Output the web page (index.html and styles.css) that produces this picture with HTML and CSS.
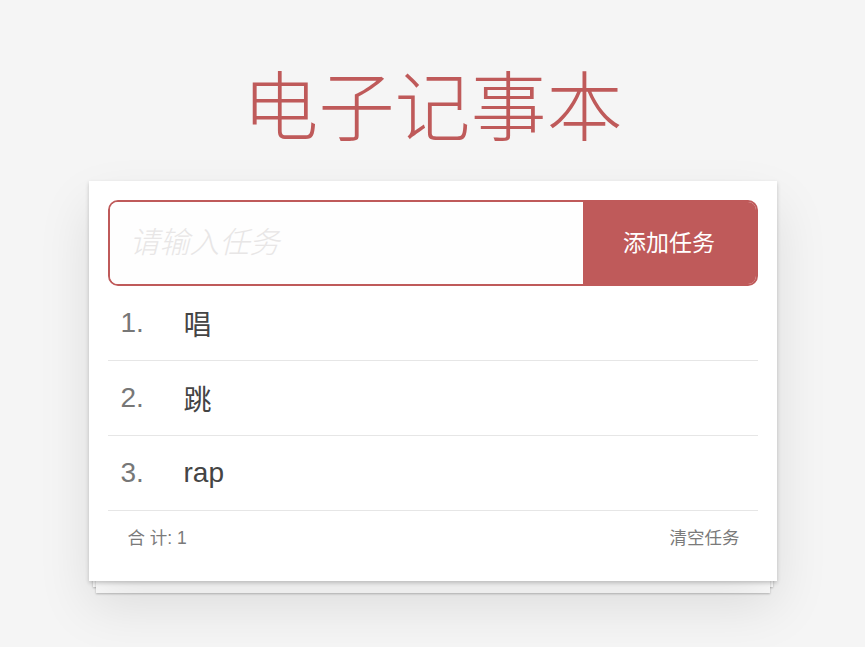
FILE: index.html
```html
<!DOCTYPE html>
<html lang="zh">
<head>
<meta charset="utf-8">
<title>电子记事本</title>
<link rel="stylesheet" href="styles.css">
</head>
<body>
<div class="app">
  <h1 class="title">电子记事本</h1>
  <section class="card">
    <div class="entry">
      <input class="entry-input" type="text" placeholder="请输入任务">
      <button class="entry-btn">添加任务</button>
    </div>
    <ul class="list">
      <li class="item"><span class="num">1.</span><span class="text">唱</span></li>
      <li class="item"><span class="num">2.</span><span class="text">跳</span></li>
      <li class="item"><span class="num">3.</span><span class="text">rap</span></li>
    </ul>
    <footer class="footer">
      <span class="count">合 计: 1</span>
      <span class="clear">清空任务</span>
    </footer>
  </section>
</div>
</body>
</html>
```
FILE: styles.css
```css
* { box-sizing: border-box; }
html, body { margin: 0; padding: 0; }
body {
  background: #f5f5f5;
  min-height: 100vh;
  font-family: "Liberation Sans", Arial, "Noto Sans CJK SC", sans-serif;
  color: #444;
}
.app {
  width: 688px;
  margin: 0 auto;
  padding: 64px 0 66px;
}
.title {
  margin: 0 0 41px;
  font-family: "Noto Sans CJK SC", sans-serif;
  font-weight: 300;
  font-size: 76px;
  line-height: 76px;
  text-align: center;
  color: #bf5a5a;
}
.card {
  position: relative;
  background: #fff;
  padding: 19px;
  box-shadow: 0 2px 4px rgba(0,0,0,0.2), 0 25px 50px rgba(0,0,0,0.1);
}
.card::before, .card::after {
  content: "";
  position: absolute;
  background: #fff;
  height: 20px;
  z-index: -1;
  box-shadow: 0 1px 2px rgba(0,0,0,0.25);
}
.card::before { left: 4px; right: 4px; bottom: -6px; }
.card::after { left: 7px; right: 7px; bottom: -12px; }
.entry {
  display: flex;
  height: 86px;
  border: 2px solid #bf5a5a;
  border-radius: 10px;
  overflow: hidden;
}
.entry-input {
  flex: 1;
  min-width: 0;
  border: 0;
  outline: none;
  padding: 0 0 0 20px;
  font-family: "Liberation Sans", "Noto Sans CJK SC", sans-serif;
  font-size: 30px;
  font-weight: 300;
  font-style: italic;
  background: #fefefe;
  color: #444;
}
.entry-input::placeholder { color: #e8e6e6; font-style: italic; }
.entry-btn {
  width: 173px;
  border: 0;
  background: #bf5a5a;
  color: #fff;
  font-family: "Noto Sans CJK SC", sans-serif;
  font-size: 23px;
  padding: 0 0 4px;
}
.list {
  list-style: none;
  margin: 0;
  padding: 0;
}
.item {
  display: flex;
  align-items: center;
  height: 75px;
  border-bottom: 1px solid #e6e6e6;
  font-size: 28px;
}
.num {
  width: 76px;
  padding-left: 13px;
  color: #777;
}
.text {
  color: #444;
  font-family: "Liberation Sans", "Noto Sans CJK SC", sans-serif;
}
.footer {
  display: flex;
  justify-content: space-between;
  align-items: center;
  height: 51px;
  padding: 0 18px 0 20px;
  font-size: 17.5px;
  color: #7a7a7a;
  font-family: "Liberation Sans", "Noto Sans CJK SC", sans-serif;
}
```
